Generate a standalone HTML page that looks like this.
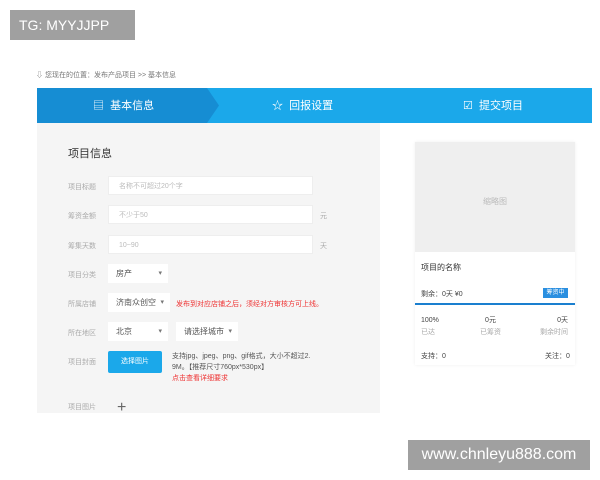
<!DOCTYPE html><html><head><meta charset="utf-8"><style>
body{margin:0;width:600px;height:480px;background:#fff;position:relative;overflow:hidden;font-family:"Liberation Sans","Noto Sans CJK SC",sans-serif}
.a{position:absolute;white-space:nowrap}
.lab{font-size:7px;color:#aaa}
.inp{position:absolute;background:#fff;border:1px solid #eee;height:19px;font-size:7px;color:#bbb;line-height:19px;padding-left:10px;box-sizing:border-box}
.sel{position:absolute;background:#fff;height:19px;font-size:8px;color:#555;line-height:19px;padding-left:8px;box-sizing:border-box}
.sel:after{content:"▾";position:absolute;right:6px;font-size:7px;color:#777}
</style></head><body>
<div class="a" style="left:10px;top:10px;width:125px;height:30px;background:#a0a0a0;color:#fff;font-size:14px;line-height:30px;padding-left:9px;box-sizing:border-box">TG: MYYJJPP</div>
<div class="a" style="left:36px;top:70px;font-size:7px;color:#777">⇩ 您现在的位置：发布产品项目 &gt;&gt; 基本信息</div>
<div class="a" style="left:37px;top:88px;width:555px;height:35px;background:#1ba8ea"></div>
<svg class="a" style="left:37px;top:88px" width="185" height="35"><polygon points="0,0 170,0 182,17.5 170,35 0,35" fill="#168dd3"/></svg>
<div class="a" style="left:93px;top:97px;font-size:11px;color:#fff">▤ &nbsp;基本信息</div>
<div class="a" style="left:272px;top:97px;font-size:11px;color:#fff">☆ &nbsp;回报设置</div>
<div class="a" style="left:463px;top:97px;font-size:11px;color:#fff">☑ &nbsp;提交项目</div>
<div class="a" style="left:37px;top:123px;width:343px;height:290px;background:#f5f5f5"></div>
<div class="a" style="left:68px;top:145px;font-size:11px;color:#333">项目信息</div>
<div class="a lab" style="left:68px;top:182px">项目标题</div><div class="inp" style="left:108px;top:176px;width:205px">名称不可超过20个字</div>
<div class="a lab" style="left:68px;top:211px">筹资金额</div><div class="inp" style="left:108px;top:205px;width:205px">不少于50</div><div class="a lab" style="left:320px;top:211px">元</div>
<div class="a lab" style="left:68px;top:241px">筹集天数</div><div class="inp" style="left:108px;top:235px;width:205px">10~90</div><div class="a lab" style="left:320px;top:241px">天</div>
<div class="a lab" style="left:68px;top:270px">项目分类</div><div class="sel" style="left:108px;top:264px;width:60px">房产</div>
<div class="a lab" style="left:68px;top:299px">所属店铺</div><div class="sel" style="left:108px;top:293px;width:62px">济南众创空</div><div class="a" style="left:176px;top:299px;font-size:7px;color:#e33">发布到对应店铺之后，须经对方审核方可上线。</div>
<div class="a lab" style="left:68px;top:328px">所在地区</div><div class="sel" style="left:108px;top:322px;width:60px">北京</div><div class="sel" style="left:176px;top:322px;width:62px">请选择城市</div>
<div class="a lab" style="left:68px;top:357px">项目封面</div><div class="a" style="left:108px;top:351px;width:54px;height:22px;background:#1ba8ea;border-radius:2px;color:#fff;font-size:7px;line-height:22px;text-align:center">选择图片</div>
<div class="a" style="left:172px;top:351px;font-size:7px;color:#555;line-height:11px">支持jpg、jpeg、png、gif格式，大小不超过2.<br>9M。【推荐尺寸760px*530px】<br><span style="color:#e33">点击查看详细要求</span></div>
<div class="a lab" style="left:68px;top:402px">项目图片</div><div class="a" style="left:117px;top:399px;font-size:16px;color:#666">+</div>
<div class="a" style="left:415px;top:142px;width:160px;height:223px;background:#fff;box-shadow:0 0 3px #eee"></div>
<div class="a" style="left:415px;top:142px;width:160px;height:110px;background:#efefef;font-size:8px;color:#bbb;line-height:120px;text-align:center">缩略图</div>
<div class="a" style="left:421px;top:262px;font-size:8px;color:#333">项目的名称</div>
<div class="a" style="left:421px;top:289px;font-size:7px;color:#444">剩余：0天 ¥0</div>
<div class="a" style="left:543px;top:288px;width:25px;height:10px;background:#2a8fe0;color:#fff;font-size:6px;line-height:10px;text-align:center">筹资中</div>
<div class="a" style="left:415px;top:303px;width:160px;height:2px;background:#1a7fcf"></div>
<div class="a" style="left:421px;top:315px;font-size:7px;color:#444;line-height:12px">100%<br><span style="color:#aaa">已达</span></div>
<div class="a" style="left:480px;top:315px;font-size:7px;color:#444;line-height:12px;text-align:center">0元<br><span style="color:#aaa">已筹资</span></div>
<div class="a" style="left:540px;top:315px;font-size:7px;color:#444;line-height:12px;text-align:right">0天<br><span style="color:#aaa">剩余时间</span></div>
<div class="a" style="left:421px;top:351px;font-size:7px;color:#444">支持：0</div>
<div class="a" style="left:545px;top:351px;font-size:7px;color:#444">关注：0</div>
<div class="a" style="left:408px;top:440px;width:182px;height:30px;background:#a0a0a0;color:#fff;font-size:16px;line-height:30px;text-align:center">www.chnleyu888.com</div>
</body></html>
